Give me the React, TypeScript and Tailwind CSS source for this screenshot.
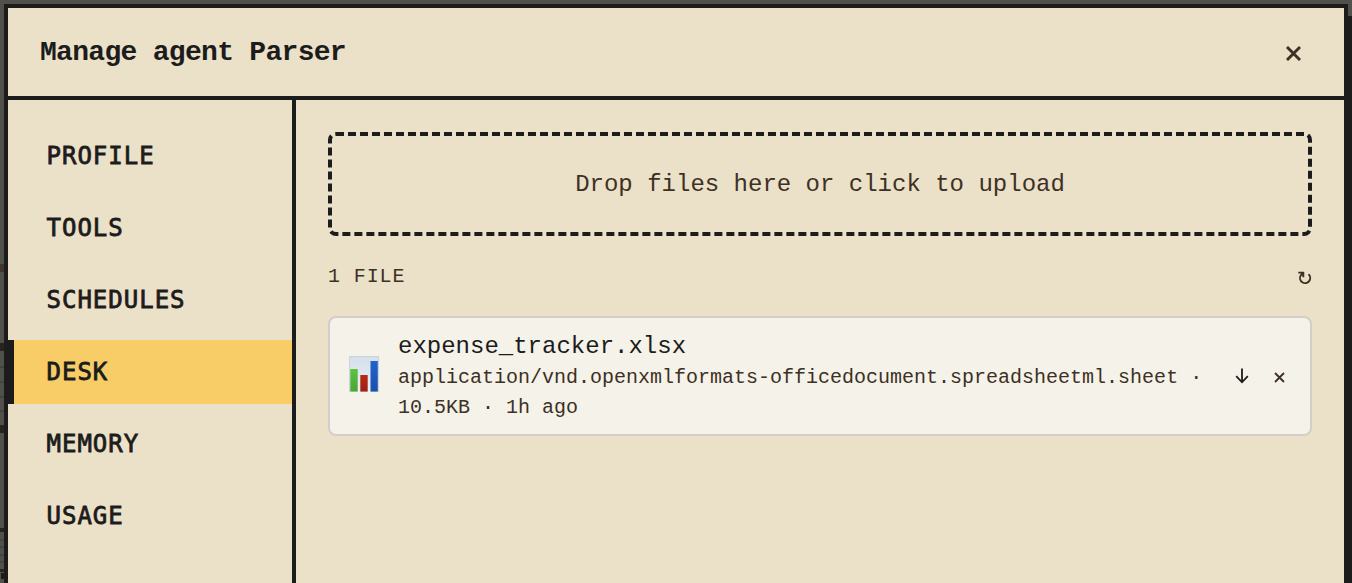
import clsx from 'clsx';

interface DeskFile {
  name: string;
  mime: string;
  size: string;
  age: string;
}

const tabs = ['Profile', 'Tools', 'Schedules', 'Desk', 'Memory', 'Usage'];

const files: DeskFile[] = [
  {
    name: 'expense_tracker.xlsx',
    mime: 'application/vnd.openxmlformats-officedocument.spreadsheetml.sheet',
    size: '10.5KB',
    age: '1h ago',
  },
];

// Sliver of the dimmed office scene left of the modal
function Backdrop() {
  return (
    <svg className="absolute left-0 top-0" width="4" height="583" viewBox="0 0 4 583" shapeRendering="crispEdges">
      <rect y="264" width="4" height="8" fill="#40362b" />
      <rect y="343" width="4" height="8" fill="#2a241e" />
      <rect y="425" width="4" height="8" fill="#2a241e" />
      <rect y="528" width="4" height="4" fill="#2a241e" />
      <rect y="569" width="4" height="3" fill="#2a241e" />
      {[366, 381, 396, 410, 539, 546, 554, 561].map((y) => (
        <rect key={y} y={y} width="4" height="2" fill="#414548" />
      ))}
      <circle cx="4" cy="576" r="3.5" fill="#1c1c1c" />
    </svg>
  );
}

function ChartIcon() {
  return (
    <svg width="30" height="36" viewBox="0 0 30 36" className="mb-1 shrink-0">
      <defs>
        <linearGradient id="sheet" x1="0" y1="0" x2="0" y2="1">
          <stop offset="0" stopColor="#d5dfe9" />
          <stop offset="1" stopColor="#eaf0f7" />
        </linearGradient>
        <linearGradient id="green" x1="0" y1="0" x2="0" y2="1">
          <stop offset="0" stopColor="#5cc241" />
          <stop offset="1" stopColor="#4ba535" />
        </linearGradient>
        <linearGradient id="red" x1="0" y1="0" x2="0" y2="1">
          <stop offset="0" stopColor="#b92b17" />
          <stop offset="1" stopColor="#9f2011" />
        </linearGradient>
        <linearGradient id="blue" x1="0" y1="0" x2="0" y2="1">
          <stop offset="0" stopColor="#2263cd" />
          <stop offset="1" stopColor="#1b4fa9" />
        </linearGradient>
      </defs>
      <rect width="30" height="36" fill="url(#sheet)" />
      <path d="M.5 36V.5h29V36" fill="none" stroke="#c9d3dd" />
      <rect x="1.3" y="13" width="7.4" height="22.6" fill="url(#green)" />
      <rect x="11.3" y="19" width="7.4" height="16.6" fill="url(#red)" />
      <rect x="21.5" y="5" width="7.3" height="30.6" fill="url(#blue)" />
    </svg>
  );
}

function CrossIcon({ size, stroke }: { size: number; stroke: number }) {
  return (
    <svg width={size} height={size} viewBox={`0 0 ${size} ${size}`} fill="none" stroke="currentColor" strokeWidth={stroke}>
      <path d={`M1 1L${size - 1} ${size - 1}M${size - 1} 1L1 ${size - 1}`} />
    </svg>
  );
}

function DownloadIcon() {
  return (
    <svg width="14" height="16" viewBox="0 0 14 16" fill="none" stroke="currentColor" strokeWidth="1.8">
      <path d="M7 .5v14M1.2 8.2L7 14.3l5.8-6.1" />
    </svg>
  );
}

function RefreshIcon() {
  return (
    <svg width="14" height="14" viewBox="0 0 14 14" fill="none" stroke="currentColor" strokeWidth="1.9">
      <path d="M10.5 3.2A5.1 5.1 0 1 1 2.6 4.6L5 2M.3 1.6H5.3V6.2" />
    </svg>
  );
}

function FileRow({ file }: { file: DeskFile }) {
  return (
    <div className="flex h-[120px] items-center rounded-lg border-2 border-[#d1cfc8] bg-[#f5f2e9] pl-[19px] pr-[25px]">
      <ChartIcon />
      <div className="ml-[19px] flex-1 pt-0.5">
        <div className="text-2xl leading-8 text-[#1c1c1c]">{file.name}</div>
        <div className="w-[820px] text-xl leading-[30px]">
          {file.mime} · {file.size} · {file.age}
        </div>
      </div>
      <div className="flex items-center gap-[25px]">
        <button className="text-[#1c1c1c]">
          <DownloadIcon />
        </button>
        <button className="pt-0.5">
          <CrossIcon size={11} stroke={1.8} />
        </button>
      </div>
    </div>
  );
}

export default function App() {
  const active = 'Desk';

  return (
    <div className="relative h-[583px] overflow-hidden bg-[#50514b] px-1 pt-1 font-['Liberation_Mono',monospace] text-[#3d3024]">
      <Backdrop />
      <div className="relative flex h-[640px] flex-col border-4 border-[#1c1c1c] bg-[#ebe0c8] shadow-[12px_12px_0_#1c1c1c]">
        <header className="flex h-[92px] shrink-0 items-center justify-between border-b-4 border-[#1c1c1c] pl-8 pr-[43px] pt-0.5">
          <h1 className="text-[28px] font-bold tracking-[-0.7px] text-[#1c1c1c]">Manage agent Parser</h1>
          <button>
            <CrossIcon size={15} stroke={2.9} />
          </button>
        </header>

        <div className="flex flex-1">
          <nav className="flex w-[288px] shrink-0 flex-col gap-2 border-r-4 border-[#1c1c1c] pt-6">
            {tabs.map((tab) => (
              <button
                key={tab}
                className={clsx(
                  "h-16 border-l-[6px] pl-[32.5px] text-left font-['DejaVu_Sans_Mono',monospace] text-2xl uppercase tracking-[1px] text-[#1c1c1c] [-webkit-text-stroke:0.8px_#1c1c1c]",
                  tab === active ? 'border-[#1c1c1c] bg-[#f8cd67]' : 'border-transparent'
                )}
              >
                {tab}
              </button>
            ))}
          </nav>

          <main className="flex-1 p-8">
            <div className="flex h-[104px] items-center justify-center rounded-lg border-4 border-dashed border-[#1c1c1c] pt-0.5 text-2xl">
              Drop files here or click to upload
            </div>
            <div className="flex h-20 items-center justify-between pt-0.5">
              <span className="text-xl uppercase tracking-[0.9px]">{files.length} file</span>
              <button className="pt-0.5">
                <RefreshIcon />
              </button>
            </div>
            {files.map((file) => (
              <FileRow key={file.name} file={file} />
            ))}
          </main>
        </div>
      </div>
    </div>
  );
}
